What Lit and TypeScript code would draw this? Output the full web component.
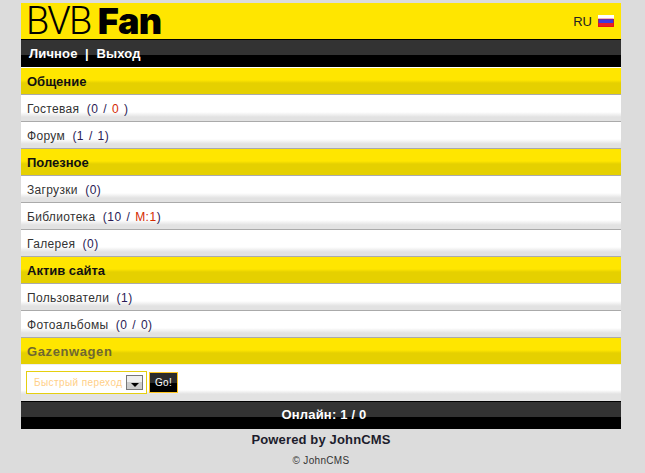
import { LitElement, html, css } from "lit";
import { customElement } from "lit/decorators.js";

type Part = { t: string; red?: boolean };
type Row = { label: string; parts: Part[] };
type Section = { title: string; rows: Row[] };

const sections: Section[] = [
  { title: "Общение", rows: [
    { label: "Гостевая", parts: [{ t: "(0 / " }, { t: "0", red: true }, { t: " )" }] },
    { label: "Форум", parts: [{ t: "(1 / 1)" }] },
  ]},
  { title: "Полезное", rows: [
    { label: "Загрузки", parts: [{ t: "(0)" }] },
    { label: "Библиотека", parts: [{ t: "(10 / " }, { t: "М:1", red: true }, { t: ")" }] },
    { label: "Галерея", parts: [{ t: "(0)" }] },
  ]},
  { title: "Актив сайта", rows: [
    { label: "Пользователи", parts: [{ t: "(1)" }] },
    { label: "Фотоальбомы", parts: [{ t: "(0 / 0)" }] },
  ]},
];

@customElement("app-root")
export class AppRoot extends LitElement {
  static styles = css`
    :host {
      display: block;
      min-height: 473px;
      background: #dcdcdc;
      font-family: "Liberation Sans", Arial, sans-serif;
      font-size: 12px;
      color: #222;
      overflow: hidden;
    }
    .page { width: 600px; margin-left: 21px; padding-top: 3px; }
    .header {
      height: 36px;
      background: #ffe600;
      display: flex;
      align-items: center;
      justify-content: space-between;
      padding: 0 7px 0 5px;
    }
    .logo { display: flex; align-items: baseline; color: #000; line-height: 36px; height: 36px; }
    .bvb { font-family: "Roboto", "Liberation Sans", sans-serif; font-weight: 300; font-size: 38px; letter-spacing: -1.6px; margin-right: 7px; }
    .fan { font-family: "Inter", "Liberation Sans", sans-serif; font-weight: 900; font-size: 36px; letter-spacing: -.6px; }
    .lang { display: flex; align-items: center; gap: 6px; font-size: 13px; color: #222; }
    .flag { display: block; }
    .nav {
      height: 28px;
      box-sizing: border-box;
      border-top: 1px solid #000;
      background: linear-gradient(#333 0 15px, #000 15px);
      color: #fff;
      font-weight: 700;
      font-size: 13px;
      letter-spacing: .15px;
      line-height: 27px;
      padding-left: 8px;
      white-space: pre;
    }
    .gap { height: 1px; background: #fff; }
    .title {
      height: 27px;
      box-sizing: border-box;
      border-bottom: 1px solid #aaa;
      background: linear-gradient(#ffe600 0 12px, #e5d000 15px);
      font-weight: 700;
      font-size: 13px;
      line-height: 28px;
      padding-left: 6px;
      color: #111;
    }
    .title.muted { color: #6f6830; border-bottom-color: #eeeeee; letter-spacing: .6px; }
    .row {
      height: 27px;
      box-sizing: border-box;
      border-bottom: 1px solid #aaa;
      background: linear-gradient(#fff 0 17px, #e2e2e2 22px);
      line-height: 28px;
      padding-left: 6px;
      letter-spacing: .32px;
      color: #333;
      white-space: pre;
    }
    .count { color: #2a1a55; letter-spacing: .5px; word-spacing: 1px; }
    .red { color: #d42a00; }
    .form {
      height: 36px;
      box-sizing: border-box;
      background: linear-gradient(#fff 0 25px, #e2e2e2 29px);
      padding: 6px 0 0 5px;
      display: flex;
      gap: 2px;
      align-items: flex-start;
    }
    .select {
      width: 121px;
      height: 23px;
      box-sizing: border-box;
      border: 1px solid #e5cf10;
      background: #fff;
      color: #ffcf88;
      font-size: 10px;
      letter-spacing: .4px;
      line-height: 21px;
      padding-left: 7px;
      position: relative;
    }
    .arrow {
      position: absolute;
      right: 3px;
      top: 3px;
      width: 17px;
      height: 15px;
      box-sizing: border-box;
      border: 1px solid #777;
      background: linear-gradient(#eee 0 6px, #ccc 6px);
      display: flex;
      align-items: flex-end;
      justify-content: center;
      padding-bottom: 2px;
    }
    .arrow::after {
      content: "";
      border: 4px solid transparent;
      border-top-color: #000;
      border-bottom-width: 0;
    }
    .go {
      width: 29px;
      height: 21px;
      margin-top: 1px;
      box-sizing: border-box;
      border: 1px solid #ffc520;
      background: linear-gradient(#2c2c2c 0 10px, #000 10px);
      color: #fff;
      font-size: 10px;
      letter-spacing: .3px;
      line-height: 19px;
      text-align: center;
    }
    .online {
      height: 28px;
      box-sizing: border-box;
      border-top: 1px solid #000;
      background: linear-gradient(#333 0 15px, #000 15px);
      color: #fff;
      font-weight: 700;
      font-size: 13px;
      letter-spacing: .2px;
      line-height: 26px;
      text-align: center;
      padding-left: 6px;
    }
    .powered { text-align: center; font-weight: 700; font-size: 13px; letter-spacing: .15px; line-height: 16px; margin-top: 3px; color: #1c1c2c; }
    .copy { text-align: center; font-size: 10px; letter-spacing: .3px; line-height: 14px; margin-top: 6px; color: #333; }
  `;

  render() {
    return html`
      <div class="page">
        <div class="header">
          <div class="logo"><span class="bvb">BVB</span><span class="fan">Fan</span></div>
          <div class="lang">RU
            <svg class="flag" width="16" height="12" viewBox="0 0 16 12">
              <rect width="16" height="4" fill="#fff"/>
              <rect y="4" width="16" height="4" fill="#3a3ae0"/>
              <rect y="8" width="16" height="4" fill="#e82020"/>
              <rect x="0.5" y="4" width="15" height="7.5" fill="none" stroke="#e01010" stroke-width="0.6"/>
            </svg>
          </div>
        </div>
        <div class="nav">Личное  |  Выход</div>
        <div class="gap"></div>
        ${sections.map(s => html`
          <div class="title">${s.title}</div>
          ${s.rows.map(r => html`<div class="row">${r.label}  <span class="count">${r.parts.map(p => html`<span class=${p.red ? "red" : ""}>${p.t}</span>`)}</span></div>`)}
        `)}
        <div class="title muted">Gazenwagen</div>
        <div class="form">
          <div class="select">Быстрый переход<span class="arrow"></span></div>
          <div class="go">Go!</div>
        </div>
        <div class="online">Онлайн: 1 / 0</div>
        <div class="powered">Powered by JohnCMS</div>
        <div class="copy">© JohnCMS</div>
      </div>
    `;
  }
}
